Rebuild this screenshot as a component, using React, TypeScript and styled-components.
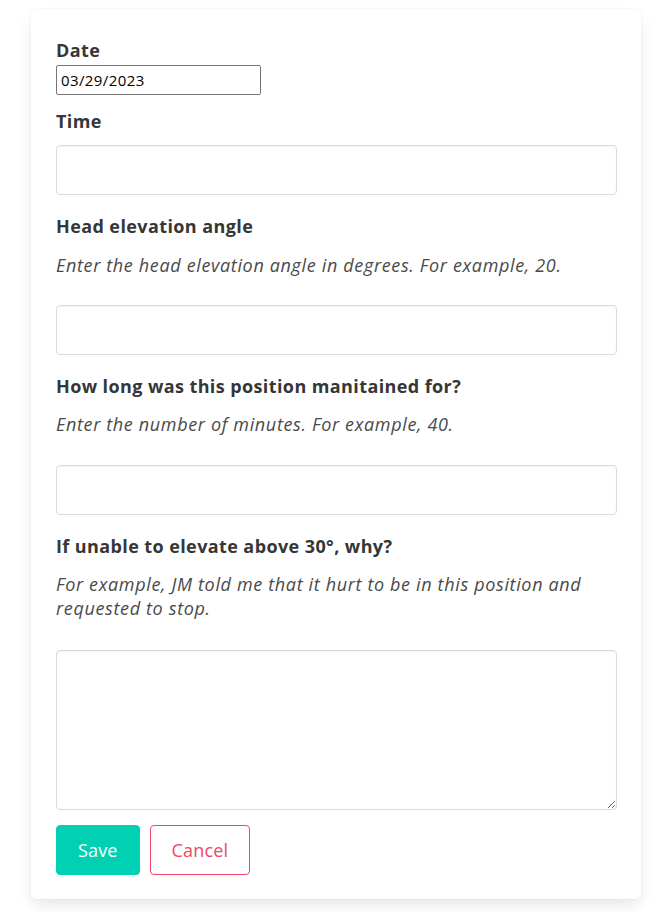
import React from "react";
import styled, { createGlobalStyle } from "styled-components";

const Global = createGlobalStyle`
  html, body { margin: 0; padding: 0; background: #ffffff; }
  body { font-family: "Open Sans", "Noto Sans", sans-serif; color: #363636; }
  * { box-sizing: border-box; }
`;

const Page = styled.div`
  padding: 9px 21px 13px 31px;
`;

const Card = styled.form`
  width: 610px;
  background: #fff;
  border-radius: 6px;
  box-shadow: 0 8px 16px -2px rgba(10, 10, 10, 0.1), 0 0 0 1px rgba(10, 10, 10, 0.02);
  padding: 29px 24px 24px 25px;
  display: flex;
  flex-direction: column;
`;

const Field = styled.div<{ $gap?: number }>`
  display: flex;
  flex-direction: column;
  margin-bottom: ${(p) => p.$gap ?? 19}px;
`;

const Label = styled.label<{ $below: number }>`
  font-size: 18px;
  font-weight: 700;
  line-height: 24px;
  letter-spacing: 0.4px;
  color: #363636;
  margin-bottom: ${(p) => p.$below}px;
`;

const Help = styled.p<{ $below: number }>`
  margin: 0 0 ${(p) => p.$below}px;
  font-size: 18px;
  font-style: italic;
  line-height: 24px;
  letter-spacing: 0.65px;
  color: #4a4a4a;
`;

const DateInput = styled.input`
  width: 205px;
  height: 30px;
  border: 1px solid #767676;
  border-radius: 2px;
  padding: 0 4px;
  font-family: "Open Sans", sans-serif;
  font-size: 15px;
  letter-spacing: 0.4px;
  color: #000;
  background: #fff;
  outline: none;
`;

const TextInput = styled.input`
  width: 100%;
  height: 50px;
  border: 1px solid #dbdbdb;
  border-radius: 4px;
  padding: 0 14px;
  font-family: inherit;
  font-size: 18px;
  background: #fff;
  box-shadow: inset 0 1px 2px rgba(10, 10, 10, 0.05);
  outline: none;
`;

const TextArea = styled.textarea`
  width: 100%;
  height: 160px;
  border: 1px solid #dbdbdb;
  border-radius: 4px;
  padding: 10px 14px;
  font-family: inherit;
  font-size: 18px;
  background: #fff;
  box-shadow: inset 0 1px 2px rgba(10, 10, 10, 0.05);
  outline: none;
  display: block;
`;

const Buttons = styled.div`
  display: flex;
  gap: 10px;
`;

const Button = styled.button<{ $variant: "primary" | "outline" }>`
  height: 50px;
  border-radius: 4px;
  font-family: inherit;
  font-size: 18px;
  line-height: 24px;
  letter-spacing: 0.15px;
  padding: 0 21px;
  cursor: pointer;
  border: 1px solid ${(p) => (p.$variant === "primary" ? "#00d1b2" : "#f14668")};
  background: ${(p) => (p.$variant === "primary" ? "#00d1b2" : "#ffffff")};
  color: ${(p) => (p.$variant === "primary" ? "#ffffff" : "#f14668")};
`;

export default function App() {
  return (
    <>
      <Global />
      <Page>
        <Card onSubmit={(e) => e.preventDefault()}>
          <Field $gap={14}>
            <Label $below={3}>Date</Label>
            <DateInput type="text" defaultValue="03/29/2023" />
          </Field>
          <Field>
            <Label $below={12}>Time</Label>
            <TextInput type="text" />
          </Field>
          <Field>
            <Label $below={15}>Head elevation angle</Label>
            <Help $below={28}>Enter the head elevation angle in degrees. For example, 20.</Help>
            <TextInput type="text" />
          </Field>
          <Field>
            <Label $below={14}>How long was this position manitained for?</Label>
            <Help $below={29}>Enter the number of minutes. For example, 40.</Help>
            <TextInput type="text" />
          </Field>
          <Field $gap={15}>
            <Label $below={14}>If unable to elevate above 30°, why?</Label>
            <Help $below={30}>
              For example, JM told me that it hurt to be in this position and requested to stop.
            </Help>
            <TextArea />
          </Field>
          <Buttons>
            <Button type="submit" $variant="primary">Save</Button>
            <Button type="button" $variant="outline">Cancel</Button>
          </Buttons>
        </Card>
      </Page>
    </>
  );
}
